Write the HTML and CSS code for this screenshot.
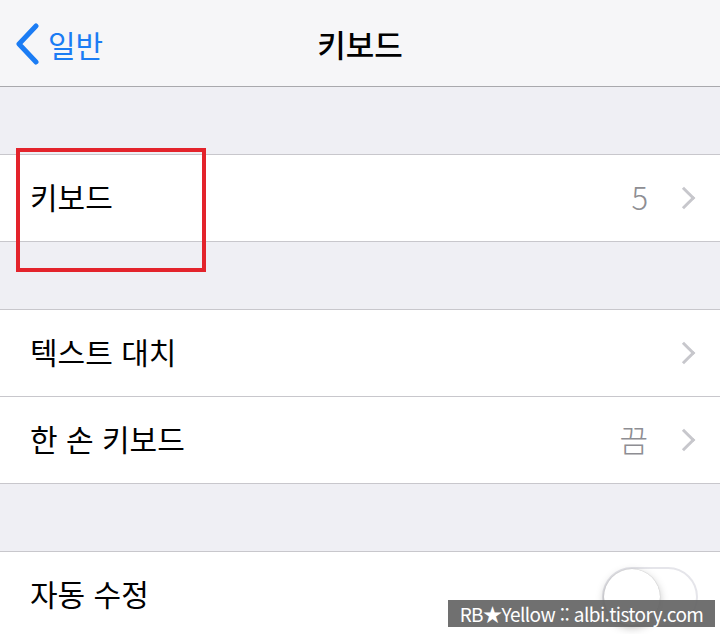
FILE: index.html
```html
<!DOCTYPE html>
<html lang="ko">
<head>
  <meta charset="UTF-8">
  <title>키보드</title>
  <meta name="viewport" content="width=device-width, initial-scale=1.0">
  <link rel="stylesheet" href="styles.css">
</head>
<body>
  <div class="screen">
    <header class="navbar">
      <a class="back">
        <svg class="back-icon" width="26" height="42" viewBox="0 0 26 42">
          <path d="M22 3 L5 21 L22 39" fill="none" stroke="#1b7cf4" stroke-width="5" stroke-linecap="round" stroke-linejoin="round"/>
        </svg>
        <span>일반</span>
      </a>
      <h1 class="title">키보드</h1>
    </header>

    <div class="gap"></div>
    <ul class="group">
      <li class="row">
        <span class="label">키보드</span>
        <span class="value">5</span>
        <span class="chevron"></span>
      </li>
    </ul>

    <div class="gap"></div>
    <ul class="group">
      <li class="row">
        <span class="label">텍스트 대치</span>
        <span class="chevron"></span>
      </li>
      <li class="row">
        <span class="label">한 손 키보드</span>
        <span class="value">끔</span>
        <span class="chevron"></span>
      </li>
    </ul>

    <div class="gap"></div>
    <ul class="group">
      <li class="row">
        <span class="label">자동 수정</span>
        <span class="toggle"><span class="knob"></span></span>
      </li>
    </ul>

    <div class="highlight"></div>
    <div class="watermark">RB★Yellow :: albi.tistory.com</div>
  </div>
</body>
</html>
```

FILE: styles.css
```css
/* Settings screen */
body {
  margin: 0;
  padding: 0;
  font-family: "Noto Sans CJK KR", "Noto Sans", sans-serif;
  background-color: #efeff4;
  overflow: hidden;
}

.screen {
  position: relative;
  width: 720px;
  height: 634px;
  overflow: hidden;
}

/* Top navigation bar */
.navbar {
  height: 86px;
  background-color: #f6f6f8;
  border-bottom: 1px solid #a9a9ad;
  display: flex;
  align-items: center;
  justify-content: center;
  position: relative;
}

.back {
  position: absolute;
  left: 14px;
  top: 22px;
  display: flex;
  align-items: center;
  gap: 8px;
  color: #1b7cf4;
  font-size: 30px;
}

.back-icon {
  display: block;
}

.title {
  margin: 0;
  font-size: 31px;
  font-weight: 500;
  color: #000;
}

.gap {
  height: 67px;
}

/* Grouped list */
.group {
  list-style: none;
  margin: 0;
  padding: 0;
  background-color: #fff;
  border-top: 1px solid #c8c7cc;
  border-bottom: 1px solid #c8c7cc;
}

.row {
  height: 86px;
  display: flex;
  align-items: center;
  padding: 0 22px 0 30px;
  position: relative;
}

.row + .row {
  border-top: 1px solid #c8c7cc;
}

.label {
  flex: 1;
  font-size: 30px;
  color: #000;
  margin-top: -4px;
}

.value {
  font-size: 31px;
  font-weight: 300;
  color: #8e8e93;
  margin-right: 28px;
  margin-top: -4px;
}

.chevron {
  width: 13px;
  height: 13px;
  border-top: 3px solid #c7c7cc;
  border-right: 3px solid #c7c7cc;
  transform: rotate(45deg);
  margin-right: 6px;
}

/* Switch */
.toggle {
  width: 92px;
  height: 56px;
  border: 2px solid #e5e5ea;
  border-radius: 30px;
  background-color: #fff;
  position: relative;
  margin-top: 4px;
}

.knob {
  position: absolute;
  left: 0;
  top: 0;
  width: 56px;
  height: 56px;
  border-radius: 50%;
  background-color: #fff;
  box-shadow: 0 3px 8px rgba(0, 0, 0, 0.25), 0 0 1px rgba(0, 0, 0, 0.3);
}

/* Overlays */
.highlight {
  position: absolute;
  left: 16px;
  top: 148px;
  width: 182px;
  height: 116px;
  border: 4px solid #e3232b;
}

.watermark {
  position: absolute;
  left: 448px;
  top: 600px;
  width: 267px;
  height: 27px;
  background-color: rgba(100, 100, 100, 0.92);
  color: #fff;
  font-size: 19px;
  line-height: 27px;
  text-align: center;
  letter-spacing: -0.6px;
  white-space: nowrap;
  overflow: hidden;
}
```
